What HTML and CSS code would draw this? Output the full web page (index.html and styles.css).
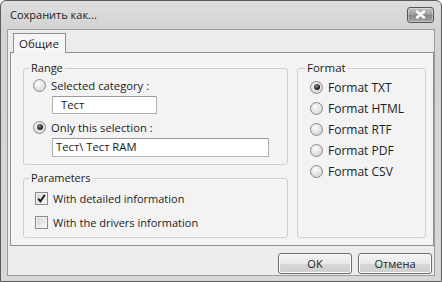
FILE: index.html
```html
<!DOCTYPE html>
<html lang="ru">
<head>
    <meta charset="UTF-8">
    <title>Сохранить как...</title>
    <link rel="stylesheet" href="styles.css">
</head>
<body>

    <div class="finestra">
        <div class="barra-titolo">
            <span class="titolo">Сохранить как...</span>
            <div class="chiudi">
                <svg width="11" height="9" viewBox="0 0 11 9">
                    <path d="M2 1.5 L9 7.5 M9 1.5 L2 7.5" stroke="#fff" stroke-width="2.4" stroke-linecap="round"/>
                </svg>
            </div>
        </div>

        <div class="client">
            <div class="schede">
                <div class="scheda attiva">Общие</div>
            </div>

            <div class="pannello">
                <div class="colonna-sinistra">
                    <fieldset class="gruppo gruppo-range">
                        <legend>Range</legend>
                        <div class="riga"><span class="radio"></span>Selected category :</div>
                        <div class="campo campo-corto">Тест</div>
                        <div class="riga riga-seconda"><span class="radio selezionato"></span>Only this selection :</div>
                        <div class="campo campo-lungo">Тест\ Тест RAM</div>
                    </fieldset>

                    <fieldset class="gruppo gruppo-parametri">
                        <legend>Parameters</legend>
                        <div class="riga">
                            <span class="check">
                                <svg width="11" height="11" viewBox="0 0 11 11">
                                    <path d="M2.2 5.6 L4.4 8.4 L8.8 2" fill="none" stroke="#1a1a1a" stroke-width="1.9"/>
                                </svg>
                            </span>With detailed information
                        </div>
                        <div class="riga"><span class="check"></span>With the drivers information</div>
                    </fieldset>
                </div>

                <fieldset class="gruppo gruppo-formato">
                    <legend>Format</legend>
                    <div class="riga"><span class="radio selezionato"></span>Format TXT</div>
                    <div class="riga"><span class="radio"></span>Format HTML</div>
                    <div class="riga"><span class="radio"></span>Format RTF</div>
                    <div class="riga"><span class="radio"></span>Format PDF</div>
                    <div class="riga"><span class="radio"></span>Format CSV</div>
                </fieldset>
            </div>

            <div class="pulsanti">
                <button type="button" class="bottone">OK</button>
                <button type="button" class="bottone">Отмена</button>
            </div>
        </div>
    </div>

</body>
</html>
```

FILE: styles.css
```css
* {
    box-sizing: border-box;
}

body {
    margin: 0;
    background-color: #fff;
    font-family: "Open Sans", "Noto Sans", sans-serif;
    font-size: 11px;
    color: #1c1c1c;
}

.finestra {
    width: 442px;
    height: 282px;
    border: 1px solid #5c5c5c;
    border-radius: 6px 6px 0 0;
    background: linear-gradient(#dedede, #d3d3d3 28px, #d8d8d8);
    padding: 0 6px 5px 6px;
    display: flex;
    flex-direction: column;
}

.barra-titolo {
    height: 28px;
    flex: none;
    display: flex;
    align-items: center;
    justify-content: space-between;
    padding-left: 3px;
    padding-right: 1px;
}

.titolo {
    font-size: 11px;
    color: #1a1a1a;
    margin-top: -1px;
}

.chiudi {
    width: 27px;
    height: 16px;
    margin-top: -1px;
    border: 1px solid #555;
    border-radius: 3px;
    background: linear-gradient(#c4c4c4, #9a9a9a 50%, #858585 51%, #a6a6a6);
    display: flex;
    align-items: center;
    justify-content: center;
    box-shadow: inset 0 0 0 1px rgba(255, 255, 255, 0.35);
}

.client {
    flex: 1;
    border: 1px solid #9a9a9a;
    background-color: #ececec;
    padding: 3px 0 0 2px;
    display: flex;
    flex-direction: column;
}

.schede {
    display: flex;
    padding-left: 3px;
    margin-bottom: -1px;
    position: relative;
    z-index: 1;
}

.scheda {
    height: 20px;
    line-height: 19px;
    padding: 0 6px 0 5px;
    border: 1px solid #8d8f95;
    border-bottom: none;
    background-color: #f6f6f6;
    font-size: 11.5px;
}

.pannello {
    width: 424px;
    height: 194px;
    border: 1px solid #8d8f95;
    background-color: #f3f3f3;
    padding: 8px 7px 7px 12px;
    display: grid;
    grid-template-columns: 265px 129px;
    column-gap: 9px;
}

.colonna-sinistra {
    display: flex;
    flex-direction: column;
    gap: 6px;
}

.gruppo {
    margin: 0;
    padding: 0;
    min-width: 0;
    border: 1px solid #cfcfcf;
    border-radius: 3px;
    display: flex;
    flex-direction: column;
}

.gruppo legend {
    padding: 0 2px;
    line-height: 14px;
    font-size: 11.5px;
}

.riga {
    height: 16px;
    display: flex;
    align-items: center;
    gap: 5px;
    white-space: nowrap;
}

.radio {
    width: 13px;
    height: 13px;
    flex: none;
    border-radius: 50%;
    border: 1px solid #8a8a8a;
    background: radial-gradient(circle at 40% 35%, #fdfdfd, #d4d4d4 80%);
    display: flex;
    align-items: center;
    justify-content: center;
}

.radio.selezionato::after {
    content: "";
    width: 6px;
    height: 6px;
    border-radius: 50%;
    background: radial-gradient(circle at 40% 35%, #8a8a8a, #151515 70%);
}

.check {
    width: 13px;
    height: 13px;
    flex: none;
    border: 1px solid #8a8a8a;
    background: linear-gradient(135deg, #d2d2d2, #f8f8f8);
    box-shadow: inset 0 0 0 1px #f4f4f4;
    display: flex;
    align-items: center;
    justify-content: center;
}

.campo {
    height: 18px;
    margin: 3px 0 0 19px;
    border: 1px solid #b0b0b0;
    border-top-color: #9a9a9a;
    background-color: #fff;
    line-height: 16px;
    padding-left: 3px;
}

.campo-corto {
    width: 105px;
    padding-left: 8px;
}

.campo-lungo {
    width: 217px;
    height: 19px;
}

.gruppo-range {
    padding: 2px 0 7px 9px;
    font-size: 11.25px;
}

.gruppo-range legend {
    margin-left: -4px;
    font-size: 11px;
}

.riga-seconda {
    margin-top: 5px;
}

.gruppo-parametri {
    padding: 5px 0 6px 11px;
    gap: 8px;
    flex: 1;
}

.gruppo-parametri legend {
    margin-left: -6px;
    font-size: 11px;
}

.gruppo-formato {
    padding: 4px 0 0 12px;
    gap: 5px;
    font-size: 12px;
}

.gruppo-formato legend {
    margin-left: -5px;
}

.pulsanti {
    display: flex;
    justify-content: flex-end;
    gap: 6px;
    margin-top: 7px;
    padding-right: 2px;
}

.bottone {
    width: 74px;
    height: 21px;
    border: 1px solid #6e6e6e;
    border-radius: 3px;
    background: linear-gradient(#f4f4f4, #e8e8e8 50%, #d8d8d8 51%, #cdcdcd);
    box-shadow: inset 0 0 0 1px #fbfbfb;
    font-family: "Open Sans", "Noto Sans", sans-serif;
    font-size: 11px;
    color: #1c1c1c;
    padding: 0;
}
```
